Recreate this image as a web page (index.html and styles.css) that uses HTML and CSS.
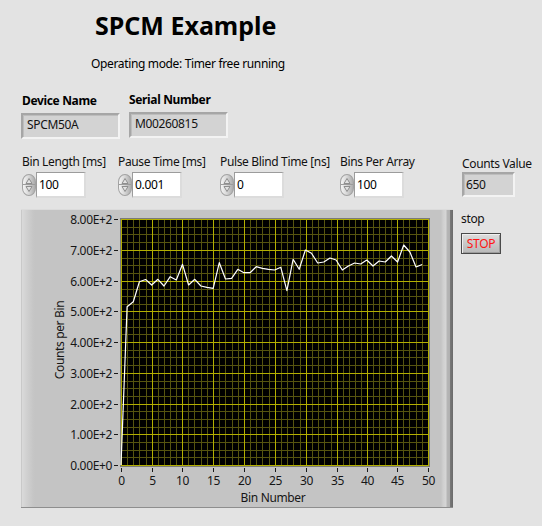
FILE: index.html
```html
<!DOCTYPE html>
<html lang="en">
<head>
<meta charset="utf-8">
<title>SPCM Example</title>
<link rel="stylesheet" href="styles.css">
</head>
<body>
<div class="panel">
  <h1 class="title">SPCM Example</h1>
  <p class="mode">Operating mode: Timer free running</p>

  <div class="ids">
    <div class="field device">
      <div class="lbl bold">Device Name</div>
      <div class="ind wide">SPCM50A</div>
    </div>
    <div class="field serial">
      <div class="lbl bold">Serial Number</div>
      <div class="ind wide">M00260815</div>
    </div>
  </div>

  <div class="controls">
    <div class="ctl">
      <div class="lbl">Bin Length [ms]</div>
      <div class="num">
        <span class="spin"><svg class="arrows" width="12" height="20" viewBox="0 0 12 20"><path d="M6 3.5 L9 8.5 H3 Z M6 16.5 L9 11.5 H3 Z"/></svg></span>
        <span class="box">100</span>
      </div>
    </div>
    <div class="ctl">
      <div class="lbl">Pause Time [ms]</div>
      <div class="num">
        <span class="spin"><svg class="arrows" width="12" height="20" viewBox="0 0 12 20"><path d="M6 3.5 L9 8.5 H3 Z M6 16.5 L9 11.5 H3 Z"/></svg></span>
        <span class="box">0.001</span>
      </div>
    </div>
    <div class="ctl">
      <div class="lbl">Pulse Blind Time [ns]</div>
      <div class="num">
        <span class="spin"><svg class="arrows" width="12" height="20" viewBox="0 0 12 20"><path d="M6 3.5 L9 8.5 H3 Z M6 16.5 L9 11.5 H3 Z"/></svg></span>
        <span class="box">0</span>
      </div>
    </div>
    <div class="ctl">
      <div class="lbl">Bins Per Array</div>
      <div class="num">
        <span class="spin"><svg class="arrows" width="12" height="20" viewBox="0 0 12 20"><path d="M6 3.5 L9 8.5 H3 Z M6 16.5 L9 11.5 H3 Z"/></svg></span>
        <span class="box">100</span>
      </div>
    </div>
    <div class="ctl counts">
      <div class="lbl">Counts Value</div>
      <div class="ind small">650</div>
    </div>
  </div>

  <div class="main">
    <div class="graph">
      <svg class="chart" width="432" height="299" viewBox="0 0 432 299">
        <rect class="plot-bg" x="99.5" y="9.5" width="309" height="248"/>
        <path class="grid-minor" d="M106.5 10V257M112.5 10V257M118.5 10V257M125.5 10V257M137.5 10V257M143.5 10V257M149.5 10V257M155.5 10V257M167.5 10V257M173.5 10V257M180.5 10V257M186.5 10V257M198.5 10V257M204.5 10V257M211.5 10V257M217.5 10V257M229.5 10V257M235.5 10V257M241.5 10V257M248.5 10V257M260.5 10V257M266.5 10V257M272.5 10V257M279.5 10V257M291.5 10V257M297.5 10V257M303.5 10V257M310.5 10V257M322.5 10V257M328.5 10V257M334.5 10V257M340.5 10V257M352.5 10V257M358.5 10V257M364.5 10V257M370.5 10V257M382.5 10V257M388.5 10V257M395.5 10V257M401.5 10V257M100 18.5H408M100 25.5H408M100 33.5H408M100 49.5H408M100 56.5H408M100 64.5H408M100 80.5H408M100 87.5H408M100 95.5H408M100 110.5H408M100 118.5H408M100 125.5H408M100 141.5H408M100 148.5H408M100 156.5H408M100 172.5H408M100 179.5H408M100 187.5H408M100 202.5H408M100 210.5H408M100 218.5H408M100 233.5H408M100 241.5H408M100 248.5H408"/>
        <path class="grid-major" d="M100.5 10V257M131.5 10V257M161.5 10V257M192.5 10V257M223.5 10V257M254.5 10V257M285.5 10V257M316.5 10V257M346.5 10V257M376.5 10V257M407.5 10V257M100 10.5H408M100 41.5H408M100 72.5H408M100 102.5H408M100 133.5H408M100 164.5H408M100 195.5H408M100 225.5H408M100 256.5H408"/>
        <rect class="plot-frame" x="99.5" y="9.5" width="309" height="248"/>
        <polyline class="trace" points="100,256 106.1,97.7 112.3,92.7 118.4,72.7 124.6,70.5 130.7,76 136.9,70.3 143,77 149.2,67.7 155.3,71 161.5,55.3 167.6,76 173.8,70.3 179.9,77 186,78.3 192.2,79.3 198.3,53.7 204.5,70 210.6,69.3 216.8,60.3 222.9,63.7 229.1,63.7 235.2,57.7 241.4,59.3 247.5,60.3 253.7,61 259.8,58.3 265.9,81.7 272.1,50.3 278.2,60.3 284.4,41 290.5,44.3 296.7,54 302.8,53 309,49 315.1,51 321.3,61 327.4,57 333.6,54 339.7,55 345.8,51 352,57 358.1,52 364.3,53 370.4,47 376.6,53 382.7,36 388.9,43 395,58 401.2,55.5"/>
        <path class="ticks" d="M93 10.5H97M93 41.5H97M93 72.5H97M93 102.5H97M93 133.5H97M93 164.5H97M93 195.5H97M93 225.5H97M93 256.5H97M100.5 259V263M131.5 259V263M161.5 259V263M192.5 259V263M223.5 259V263M254.5 259V263M285.5 259V263M316.5 259V263M346.5 259V263M376.5 259V263M407.5 259V263"/>
        <g class="ylabels">
          <text x="91" y="14.5">8.00E+2</text>
          <text x="91" y="45.5">7.00E+2</text>
          <text x="91" y="76.5">6.00E+2</text>
          <text x="91" y="106.5">5.00E+2</text>
          <text x="91" y="137.5">4.00E+2</text>
          <text x="91" y="168.5">3.00E+2</text>
          <text x="91" y="199.5">2.00E+2</text>
          <text x="91" y="229.5">1.00E+2</text>
          <text x="91" y="260.5">0.00E+0</text>
        </g>
        <g class="xlabels">
          <text x="100.5" y="276">0</text>
          <text x="131.5" y="276">5</text>
          <text x="161.5" y="276">10</text>
          <text x="192.5" y="276">15</text>
          <text x="223.5" y="276">20</text>
          <text x="254.5" y="276">25</text>
          <text x="285.5" y="276">30</text>
          <text x="316.5" y="276">35</text>
          <text x="346.5" y="276">40</text>
          <text x="376.5" y="276">45</text>
          <text x="407.5" y="276">50</text>
        </g>
        <text class="axis-title" x="252" y="292.5">Bin Number</text>
        <text class="axis-title" transform="translate(43 131) rotate(-90)">Counts per Bin</text>
      </svg>
    </div>
    <div class="stopcol">
      <div class="lbl">stop</div>
      <button class="stop" type="button">STOP</button>
    </div>
  </div>
</div>
</body>
</html>
```

FILE: styles.css
```css
* {
  box-sizing: border-box;
}

html,
body {
  margin: 0;
  padding: 0;
}

body {
  width: 542px;
  height: 526px;
  overflow: hidden;
  background: #e3e3e3;
  font-family: "Noto Sans", "Open Sans", sans-serif;
  font-size: 12px;
  letter-spacing: -0.35px;
  color: #121212;
}

.panel {
  padding-top: 10px;
}

.title {
  margin: 0 0 0 95px;
  font-size: 25px;
  line-height: 30px;
  font-weight: 700;
  letter-spacing: 0;
  color: #000;
}

.mode {
  margin: 16px 0 0 91px;
  line-height: 16px;
  color: #000;
}

.lbl {
  line-height: 16px;
  white-space: nowrap;
}

.bold {
  font-weight: 700;
  color: #000;
}

/* Device / serial indicators */
.ids {
  display: flex;
  margin-top: 20px;
  padding-left: 21px;
}

.field {
  display: flex;
  flex-direction: column;
}

.device {
  width: 108px;
  padding-top: 1px;
}

.device .lbl {
  padding-left: 1px;
}

.ids .ind {
  margin-top: 4px;
}

.ind {
  background: #d3d3d3;
  border-style: solid;
  border-width: 2px;
  border-color: #a6a6a6 #f3f3f3 #f3f3f3 #a6a6a6;
  box-shadow: inset 1px 1px 0 #bdbdbd;
  padding-left: 4px;
  white-space: nowrap;
}

.wide {
  width: 99px;
  height: 26px;
  line-height: 20px;
}

.small {
  width: 53px;
  height: 25px;
  line-height: 21px;
  padding-left: 2px;
}

/* Numeric controls row */
.controls {
  display: grid;
  grid-template-columns: 96px 102px 120px 122px auto;
  margin-top: 15px;
  padding-left: 22px;
}

.ctl {
  display: flex;
  flex-direction: column;
}

.ctl .lbl {
  margin-bottom: 2px;
}

.counts .lbl {
  padding-top: 2px;
  margin-bottom: 0;
}

.num {
  display: flex;
  height: 26px;
}

.spin {
  display: block;
  width: 14px;
  height: 22px;
  margin-top: 2px;
  border: 1px solid #a2a2a2;
  border-radius: 7px / 8px;
  background:
    linear-gradient(to bottom, transparent 9.5px, #9c9c9c 9.5px, #9c9c9c 10.5px, transparent 10.5px),
    linear-gradient(to right, #f4f4f4 0, #d9d9d9 45%, #acacac 100%);
}

.arrows {
  display: block;
}

.arrows path {
  fill: #e2e2e2;
  stroke: #8e8e8e;
  stroke-width: 1;
  stroke-linejoin: round;
}

.box {
  display: block;
  width: 50px;
  height: 26px;
  background: #fff;
  border-style: solid;
  border-width: 1px 2px 2px 1px;
  border-color: #9c9c9c #dcdcdc #dcdcdc #9c9c9c;
  padding-left: 2px;
  line-height: 23px;
  color: #000;
}

/* Graph + stop */
.main {
  display: flex;
  margin-top: 11px;
  padding-left: 21px;
}

.graph {
  width: 432px;
  height: 299px;
  background: linear-gradient(to right,
    #b8b8b8 0, #dadada 1px, #d2d2d2 5px, #c6c6c6 12px, #c4c4c4 14px,
    #c4c4c4 420px, #cfcfcf 422px, #d6d6d6 425px, #b6b6b6 426px,
    #b0b0b0 429px, #7a7a7a 429px, #6a6a6a 432px);
  box-shadow: inset 0 1px 0 #dcdcdc, inset 0 -1px 0 #8e8e8e;
}

.chart {
  display: block;
}

.plot-bg {
  fill: #000;
}

.grid-minor {
  stroke: #56540f;
  stroke-width: 1;
  fill: none;
}

.grid-major {
  stroke: #b3af00;
  stroke-width: 1;
  fill: none;
}

.plot-frame {
  fill: none;
  stroke: #7a7a7a;
  stroke-width: 1;
}

.trace {
  fill: none;
  stroke: #fff;
  stroke-width: 1.2;
  stroke-linejoin: round;
}

.ticks {
  stroke: #1a1a1a;
  stroke-width: 1;
  fill: none;
}

.ylabels text,
.xlabels text,
.axis-title {
  font-family: "Noto Sans", "Open Sans", sans-serif;
  font-size: 12px;
  letter-spacing: -0.35px;
  fill: #161616;
}

.ylabels text {
  text-anchor: end;
}

.xlabels text,
.axis-title {
  text-anchor: middle;
}

.stopcol {
  margin-left: 8px;
  padding-top: 2px;
}

.stop {
  display: block;
  margin-top: 6px;
  width: 40px;
  height: 21px;
  padding: 0;
  border: 1px solid #4a4a4a;
  background: linear-gradient(to bottom, #dedede 0, #c8c8c8 50%, #b8b8b8 100%);
  box-shadow: inset 1px 1px 0 #efefef, inset -1px -1px 0 #9c9c9c;
  font-family: "Noto Sans", "Open Sans", sans-serif;
  font-size: 12px;
  letter-spacing: -0.35px;
  line-height: 19px;
  text-align: center;
  color: #ff1414;
}
```
